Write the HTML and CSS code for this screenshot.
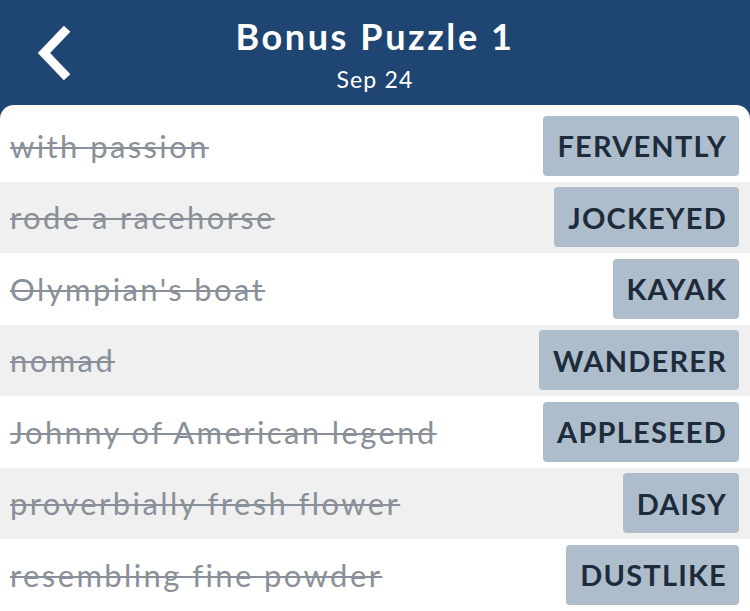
FILE: index.html
```html
<!DOCTYPE html>
<html>
<head>
<meta charset="utf-8">
<link rel="stylesheet" href="styles.css">
</head>
<body>
<header class="header">
  <svg class="back" width="50" height="70" viewBox="0 0 50 70"><path d="M34 12 L14 33 L34 54" fill="none" stroke="#fff" stroke-width="9" stroke-linecap="square" stroke-linejoin="miter"/></svg>
  <div class="title">Bonus Puzzle 1</div>
  <div class="date">Sep 24</div>
</header>
<main class="card">
  <div class="row"><span class="clue">with passion</span><span class="answer">FERVENTLY</span></div>
  <div class="row alt"><span class="clue">rode a racehorse</span><span class="answer">JOCKEYED</span></div>
  <div class="row"><span class="clue">Olympian's boat</span><span class="answer">KAYAK</span></div>
  <div class="row alt"><span class="clue">nomad</span><span class="answer">WANDERER</span></div>
  <div class="row"><span class="clue">Johnny of American legend</span><span class="answer">APPLESEED</span></div>
  <div class="row alt"><span class="clue">proverbially fresh flower</span><span class="answer">DAISY</span></div>
  <div class="row"><span class="clue">resembling fine powder</span><span class="answer">DUSTLIKE</span></div>
</main>
</body>
</html>
```
FILE: styles.css
```css
html, body {
  margin: 0;
  padding: 0;
  background: #1f4673;
  font-family: "Lato", "Open Sans", sans-serif;
  overflow: hidden;
}
.header {
  position: relative;
  height: 105px;
  color: #fff;
  display: flex;
  flex-direction: column;
  align-items: center;
}
.back {
  position: absolute;
  left: 30px;
  top: 20px;
}
.title {
  margin-top: 14px;
  font-size: 36px;
  font-weight: 700;
  letter-spacing: 2.6px;
  line-height: 44px;
}
.date {
  margin-top: 7px;
  font-size: 23px;
  letter-spacing: 1.2px;
  line-height: 28px;
}
.card {
  background: #fff;
  border-radius: 14px 14px 0 0;
  padding-top: 5px;
  height: 520px;
}
.row {
  height: 71.5px;
  display: flex;
  align-items: center;
  justify-content: space-between;
  padding: 0 11px 0 10px;
}
.row.alt {
  background: #f0f0f0;
}
.clue {
  font-size: 31px;
  color: #8a9099;
  letter-spacing: 2.4px;
  text-decoration: line-through;
  text-decoration-thickness: 2px;
}
.answer {
  height: 60px;
  display: flex;
  align-items: center;
  padding: 0 12px 0 14px;
  background: #adbdcc;
  border-radius: 4px;
  color: #1d2b3a;
  font-size: 29px;
  font-weight: 700;
  letter-spacing: 1.2px;
}
```
